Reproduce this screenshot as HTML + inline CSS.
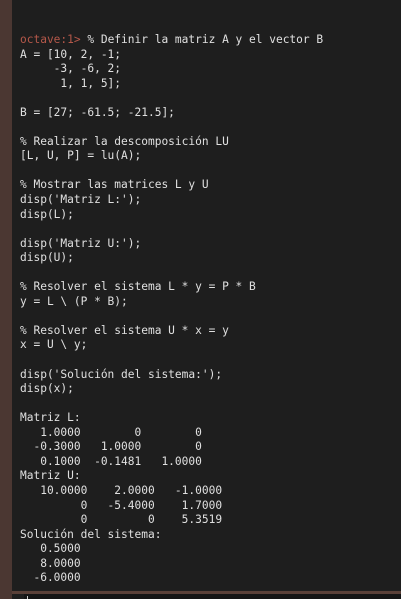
<!DOCTYPE html>
<html><head><meta charset="utf-8"><style>
html,body{margin:0;padding:0;width:401px;height:599px;overflow:hidden;background:#1e1e1e;}
#lb{position:absolute;left:0;top:0;width:12px;height:599px;background:#4b3732;}
#bs{position:absolute;left:12px;top:591px;width:389px;height:3px;background:#5a4038;}
#bb{position:absolute;left:24px;top:594px;width:377px;height:5px;background:#151515;}
#cur{position:absolute;left:27px;top:596px;width:1px;height:3px;background:#ccc;}
pre{position:absolute;left:20px;top:33px;margin:0;font-family:"DejaVu Sans Mono","Liberation Mono",monospace;font-size:11.2px;line-height:14.54px;color:#e0e0e0;}
.p{color:#b5584a;}
</style></head><body>
<div id="lb"></div><div id="bs"></div><div id="bb"></div><div id="cur"></div>
<pre><span class="p">octave:1&gt;</span> % Definir la matriz A y el vector B
A = [10, 2, -1;
     -3, -6, 2;
      1, 1, 5];

B = [27; -61.5; -21.5];

% Realizar la descomposición LU
[L, U, P] = lu(A);

% Mostrar las matrices L y U
disp('Matriz L:');
disp(L);

disp('Matriz U:');
disp(U);

% Resolver el sistema L * y = P * B
y = L \ (P * B);

% Resolver el sistema U * x = y
x = U \ y;

disp('Solución del sistema:');
disp(x);

Matriz L:
   1.0000        0        0
  -0.3000   1.0000        0
   0.1000  -0.1481   1.0000
Matriz U:
   10.0000    2.0000   -1.0000
         0   -5.4000    1.7000
         0         0    5.3519
Solución del sistema:
   0.5000
   8.0000
  -6.0000</pre>
</body></html>
